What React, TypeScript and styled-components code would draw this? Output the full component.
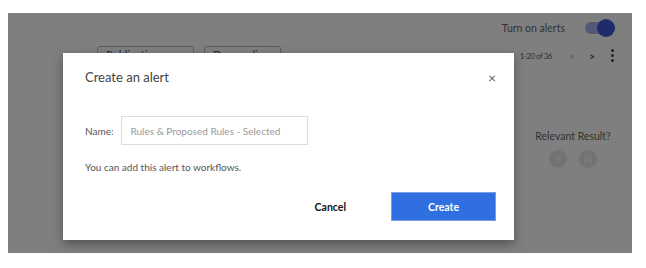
import styled, { createGlobalStyle } from "styled-components";

const GlobalStyle = createGlobalStyle`
  html, body {
    margin: 0;
    background: #ffffff;
    font-family: Lato, "Open Sans", sans-serif;
  }
`;

const Page = styled.div`
  width: 646px;
  height: 268px;
  padding: 13px 14px 15px 8px;
  box-sizing: border-box;
`;

const Screen = styled.div`
  position: relative;
  width: 624px;
  height: 240px;
  background: #ffffff;
  overflow: hidden;
`;

const TopBar = styled.div`
  display: flex;
  justify-content: flex-end;
  align-items: center;
  gap: 20px;
  padding: 5px 19px 0 0;
  height: 20px;
  font-size: 10.5px;
  color: #666;
`;

const Toggle = styled.div`
  position: relative;
  width: 28px;
  height: 12px;
  border-radius: 6px;
  background: #aab2ee;

  &::after {
    content: "";
    position: absolute;
    right: -2px;
    top: -3px;
    width: 18px;
    height: 18px;
    border-radius: 50%;
    background: #3e58d6;
  }
`;

const ToolRow = styled.div`
  display: flex;
  align-items: flex-start;
  padding: 8px 18px 0 89px;
  gap: 10px;
`;

const SortButton = styled.div<{ $w: number }>`
  width: ${(p) => p.$w}px;
  height: 22px;
  box-sizing: border-box;
  border: 1px solid #bbb;
  border-radius: 3px;
  font-size: 11px;
  color: #555;
  padding: 1px 8px;
`;

const Pager = styled.div`
  margin-left: auto;
  display: flex;
  align-items: center;
  gap: 12px;
  padding-top: 3px;
  font-size: 8px;
  letter-spacing: -0.5px;
  color: #666;
`;

const PageInfo = styled.span`
  margin-right: 4px;
`;

const Chevron = styled.span<{ $muted?: boolean }>`
  font-size: 10px;
  font-weight: 700;
  color: ${(p) => (p.$muted ? "#c8c8c8" : "#444")};
  width: 8px;
  text-align: center;
`;

const Dots = styled.span`
  display: flex;
  flex-direction: column;
  gap: 2px;
  margin-left: 3px;

  i {
    width: 3px;
    height: 3px;
    border-radius: 50%;
    background: #444;
  }
`;

const Relevant = styled.div`
  display: flex;
  flex-direction: column;
  align-items: center;
  gap: 8px;
  margin: 62px 14px 0 auto;
  width: 90px;
  font-size: 10.5px;
  color: #666;
`;

const Pills = styled.div`
  display: flex;
  gap: 12px;
`;

const Pill = styled.span`
  width: 18px;
  height: 18px;
  border-radius: 50%;
  background: #e6e6e6;
  color: #fff;
  font-size: 10px;
  display: flex;
  align-items: center;
  justify-content: center;
`;

const Overlay = styled.div`
  position: absolute;
  inset: 0;
  background: rgba(0, 0, 0, 0.5);
  padding: 40px 0 0 55px;
`;

const Modal = styled.div`
  width: 451px;
  height: 187px;
  background: #fff;
  box-shadow: 0 4px 10px rgba(0, 0, 0, 0.35);
  box-sizing: border-box;
  padding: 0 18px 0 22px;
  display: flex;
  flex-direction: column;
`;

const Header = styled.div`
  display: flex;
  align-items: center;
  justify-content: space-between;
  height: 48px;
`;

const Title = styled.h2`
  margin: 0;
  font-size: 13px;
  font-weight: 400;
  color: #444;
`;

const Close = styled.span`
  font-size: 14px;
  color: #666;
`;

const Field = styled.label`
  display: flex;
  align-items: center;
  gap: 8px;
  margin-top: 15px;
  font-size: 10px;
  color: #555;
`;

const Input = styled.input`
  width: 187px;
  height: 29px;
  box-sizing: border-box;
  border: 1px solid #ddd;
  padding: 0 8px;
  font-family: inherit;
  font-size: 10px;
  color: #999;
  outline: none;

  &::placeholder {
    color: #999;
  }
`;

const Hint = styled.p`
  margin: 16px 0 0;
  font-size: 10px;
  color: #555;
`;

const Actions = styled.div`
  display: flex;
  justify-content: flex-end;
  align-items: center;
  gap: 45px;
  margin-top: 19px;
`;

const TextButton = styled.button`
  border: 0;
  background: none;
  padding: 0;
  font-family: inherit;
  font-size: 10.5px;
  font-weight: 700;
  color: #111;
`;

const PrimaryButton = styled.button`
  width: 105px;
  height: 29px;
  border: 1px solid #7c9be6;
  background: #2f6fdf;
  color: #fff;
  font-family: inherit;
  font-size: 10.5px;
  font-weight: 700;
`;

export default function App() {
  return (
    <Page>
      <GlobalStyle />
      <Screen>
        <TopBar>
          <span>Turn on alerts</span>
          <Toggle />
        </TopBar>
        <ToolRow>
          <SortButton $w={97}>Publication Date</SortButton>
          <SortButton $w={77}>Descending</SortButton>
          <Pager>
            <PageInfo>1-20 of 36</PageInfo>
            <Chevron $muted>&lt;</Chevron>
            <Chevron>&gt;</Chevron>
            <Dots>
              <i />
              <i />
              <i />
            </Dots>
          </Pager>
        </ToolRow>
        <Relevant>
          <span>Relevant Result?</span>
          <Pills>
            <Pill>Y</Pill>
            <Pill>N</Pill>
          </Pills>
        </Relevant>

        <Overlay>
          <Modal>
            <Header>
              <Title>Create an alert</Title>
              <Close>×</Close>
            </Header>
            <Field>
              Name:
              <Input placeholder="Rules & Proposed Rules - Selected" />
            </Field>
            <Hint>You can add this alert to workflows.</Hint>
            <Actions>
              <TextButton>Cancel</TextButton>
              <PrimaryButton>Create</PrimaryButton>
            </Actions>
          </Modal>
        </Overlay>
      </Screen>
    </Page>
  );
}
